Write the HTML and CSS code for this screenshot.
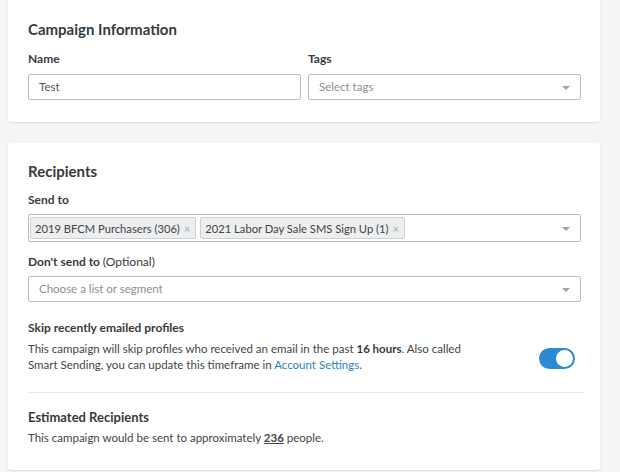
FILE: index.html
```html
<!DOCTYPE html>
<html>
<head>
<meta charset="utf-8">
<link rel="stylesheet" href="styles.css">
</head>
<body>
<div class="page">
  <section class="card card-info">
    <h2 class="card-title">Campaign Information</h2>
    <div class="two-col">
      <div class="field">
        <label class="label">Name</label>
        <div class="input">Test</div>
      </div>
      <div class="field">
        <label class="label">Tags</label>
        <div class="input select placeholder">Select tags<span class="caret"></span></div>
      </div>
    </div>
  </section>

  <section class="card card-recipients">
    <h2 class="card-title">Recipients</h2>
    <label class="label label-send">Send to</label>
    <div class="multi">
      <span class="tag">2019 BFCM Purchasers (306)<span class="x">×</span></span>
      <span class="tag">2021 Labor Day Sale SMS Sign Up (1)<span class="x">×</span></span>
      <span class="caret"></span>
    </div>
    <label class="label label-2">Don't send to <span class="optional">(Optional)</span></label>
    <div class="input select placeholder">Choose a list or segment<span class="caret"></span></div>

    <div class="skip">
      <div class="skip-text">
        <div class="label skip-label">Skip recently emailed profiles</div>
        <p class="desc">
          <span class="line">This campaign will skip profiles who received an email in the past <b>16 hours</b>. Also called</span>
          <span class="line">Smart Sending, you can update this timeframe in <a class="link">Account Settings</a>.</span>
        </p>
      </div>
      <div class="toggle"><span class="knob"></span></div>
    </div>

    <div class="divider"></div>

    <h3 class="sub-title">Estimated Recipients</h3>
    <p class="desc">This campaign would be sent to approximately <span class="count">236</span> people.</p>
  </section>
</div>
</body>
</html>
```

FILE: styles.css
```css
* { box-sizing: border-box; }
html, body { margin: 0; padding: 0; }
body {
  background: #f4f5f6;
  font-family: "Lato", "Open Sans", sans-serif;
  color: #373a3c;
  width: 620px;
  height: 472px;
  overflow: hidden;
}
.page {
  padding: 0 20px 0 8px;
}
.card {
  background: #fff;
  border-radius: 3px;
  box-shadow: 0 1px 2px rgba(0,0,0,0.10);
  padding: 19px 19px 22px 20px;
}
.card-info {
  border-top-left-radius: 0;
  border-top-right-radius: 0;
}
.card-recipients {
  margin-top: 21px;
  padding-top: 18px;
  padding-bottom: 24px;
}
.card-title {
  margin: 0;
  font-size: 15px;
  line-height: 20px;
  font-weight: 700;
  color: #373a3c;
}
.two-col {
  display: grid;
  grid-template-columns: 1fr 1fr;
  gap: 7px;
  margin-top: 12px;
}
.field { display: flex; flex-direction: column; }
.label {
  display: block;
  font-size: 12px;
  line-height: 16px;
  font-weight: 700;
  color: #373a3c;
  margin-bottom: 7px;
}
.optional { font-weight: 400; }
.input {
  position: relative;
  height: 26px;
  border: 1px solid #b8bcc0;
  border-radius: 2px;
  padding: 0 10px;
  font-size: 11.5px;
  line-height: 24px;
  color: #555;
  background: #fff;
}
.placeholder { color: #8c8f92; }
.caret {
  position: absolute;
  right: 10px;
  top: 50%;
  margin-top: -1px;
  width: 0; height: 0;
  border-left: 4px solid transparent;
  border-right: 4px solid transparent;
  border-top: 4px solid #a0a4a8;
}
.label-send { margin-top: 11px; margin-bottom: 6px; }
.multi {
  position: relative;
  height: 28px;
  border: 1px solid #b8bcc0;
  border-radius: 2px;
  padding: 2px 1px;
  display: flex;
  gap: 4px;
  align-items: stretch;
}
.tag {
  display: flex;
  align-items: center;
  background: #eceeef;
  border: 1px solid #cfd2d4;
  border-radius: 2px;
  padding: 0 5px 0 4px;
  font-size: 11.2px;
  color: #444;
  white-space: nowrap;
}
.x {
  color: #a6a9ac;
  margin-left: 4px;
  font-size: 11px;
}
.label-2 { margin-top: 12px; margin-bottom: 6px; }
.skip {
  display: flex;
  align-items: flex-start;
  justify-content: space-between;
  margin-top: 18px;
}
.skip-text { width: 460px; }
.skip-label { margin: 0 0 5px; }
.desc {
  margin: 0;
  font-size: 11.5px;
  line-height: 16px;
  color: #444;
}
.line { display: block; white-space: nowrap; }
.desc b { font-weight: 700; color: #373a3c; }
.link { color: #2f7fb6; text-decoration: none; }
.toggle {
  width: 36px;
  height: 21px;
  border-radius: 11px;
  background: #2b8ad1;
  margin-top: 28px;
  margin-right: 6px;
  position: relative;
}
.knob {
  position: absolute;
  right: 2px;
  top: 2px;
  width: 17px;
  height: 17px;
  border-radius: 50%;
  background: #fff;
}
.divider {
  height: 1px;
  background: #e6e8ea;
  margin: 19px -4px 0 0;
}
.sub-title {
  margin: 15px 0 4px;
  font-size: 13px;
  line-height: 18px;
  font-weight: 700;
  color: #373a3c;
}
.count {
  font-weight: 700;
  text-decoration: underline;
}
```
